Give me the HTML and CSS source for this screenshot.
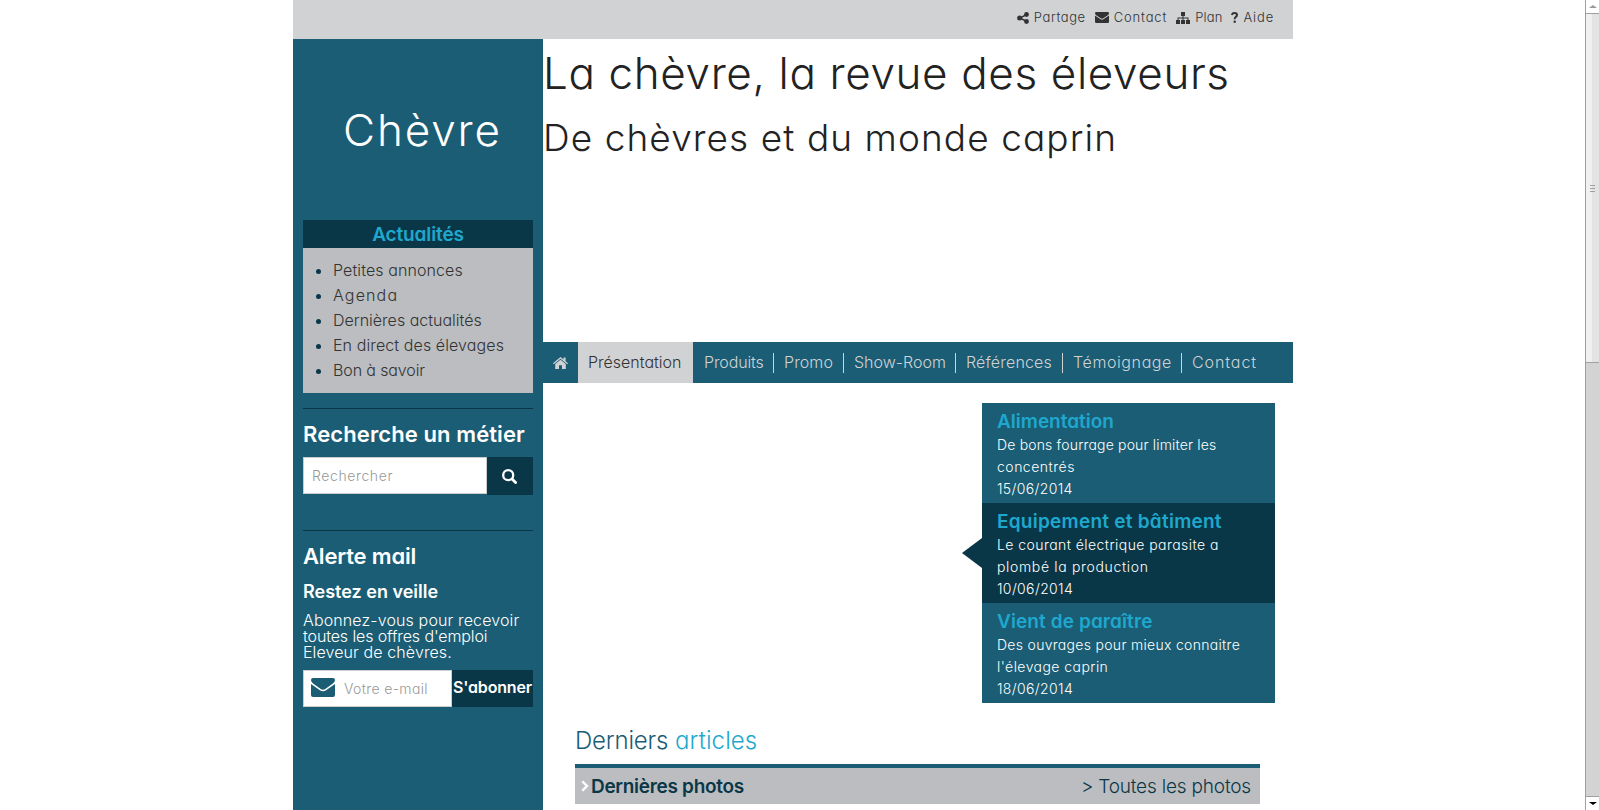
FILE: index.html
```
<!DOCTYPE html>
<html lang="fr">
<head>
<meta charset="utf-8">
<title>Chèvre</title>
<link rel="stylesheet" href="styles.css">
</head>
<body>
<div class="page">
<header class="topbar">
<a class="tool"><svg class="i-share" viewBox="0 0 12 12"><path d="M3 6 9.500 2.700M3 6l6.500 3.300" stroke="currentColor" stroke-width="1.500"/><circle cx="2.600" cy="6" r="2.500"/><circle cx="9.500" cy="2.500" r="2.400"/><circle cx="9.500" cy="9.500" r="2.400"/></svg><span class="ls-6">Partage</span></a>
<a class="tool"><svg class="i-mail" viewBox="0 0 14 11"><path d="M0 1.200Q0 0 1.200 0H12.800Q14 0 14 1.200 14 2.300 12.800 3.200L8.300 6.300Q7 7.200 5.700 6.300L1.200 3.200Q0 2.300 0 1.200ZM0 3.500 5.200 7.100Q7 8.300 8.800 7.100L14 3.500V9.800Q14 11 12.800 11H1.200Q0 11 0 9.800Z"/></svg><span class="ls-8">Contact</span></a>
<a class="tool"><svg class="i-plan" viewBox="0 0 14 12"><path d="M5 0H9V4H7.500V5.500H12.500V8H14V12H10V8H11.500V6.500H7.500V8H9V12H5V8H6.500V6.500H2.500V8H4V12H0V8H1.500V5.500H6.500V4H5Z"/></svg><span class="ls-2">Plan</span></a>
<a class="tool"><svg class="i-help" viewBox="0 0 7 11"><path class="line" d="M.8 3Q1.200 1 3.500 1 6 1 6 3 6 4.300 4.600 5 3.700 5.500 3.700 7.200" stroke-width="2"/><path d="M2.600 8.600h2.200v2.200h-2.200z"/></svg><span class="ls-8">Aide</span></a>
</header>
<div class="columns">
<aside class="sidebar">
<div class="logo">Chèvre</div>
<h3 class="box-title">Actualités</h3>
<ul class="box-list">
<li><span class="ls-1">Petites annonces</span></li>
<li><span class="ls-11">Agenda</span></li>
<li>Dernières actualités</li>
<li><span class="ls-1">En direct des élevages</span></li>
<li><span class="ls-m1">Bon à savoir</span></li>
</ul>
<section class="search">
<h2 class="side-title"><span class="ls-1">Recherche un métier</span></h2>
<div class="field"><div class="input"><span class="ls-6">Rechercher</span></div><div class="btn-search"><svg class="i-search line" viewBox="0 0 15 15"><circle cx="6.200" cy="6.200" r="5" stroke-width="2.300"/><path d="m10 10 3.600 3.600" stroke-width="2.800" stroke-linecap="round"/></svg></div></div>
</section>
<section class="alert">
<h2 class="side-title"><span class="ls-m2">Alerte mail</span></h2>
<h3 class="side-sub">Restez en veille</h3>
<p class="intro"><span class="ls-15">Abonnez-vous pour recevoir</span><br><span class="ls-m1">toutes les offres d'emploi</span><br><span class="ls-1">Eleveur de chèvres.</span></p>
<div class="field"><div class="input mail"><svg class="i-big" viewBox="0 0 14 11" preserveAspectRatio="none"><path d="M0 1.200Q0 0 1.200 0H12.800Q14 0 14 1.200 14 2.300 12.800 3.200L8.300 6.300Q7 7.200 5.700 6.300L1.200 3.200Q0 2.300 0 1.200ZM0 3.500 5.200 7.100Q7 8.300 8.800 7.100L14 3.500V9.800Q14 11 12.800 11H1.200Q0 11 0 9.800Z"/></svg><span class="ls-4">Votre e-mail</span></div><div class="btn-sub"><span class="ls-m2">S'abonner</span></div></div>
</section>
</aside>
<main class="main">
<div class="hero">
<h1>La chèvre, la revue des éleveurs</h1>
<h2>De chèvres et du monde caprin</h2>
</div>
<nav class="nav">
<a class="home"><svg class="i-home" viewBox="0 0 15 12"><path d="M0 6.300 7.500 0 10.500 2.500V.6H12.600V4.300L15 6.300 14.200 7.200 7.500 1.700.8 7.200Z"/><path d="M2.200 7 7.500 2.700 12.800 7V12H9V8.200H6V12H2.200Z"/></svg></a>
<a class="active">Présentation</a>
<a class="n1"><span class="ls-m1">Produits</span></a>
<a class="n2"><span class="ls-1">Promo</span></a>
<a class="n3">Show-Room</a>
<a class="n4"><span class="ls-2">Références</span></a>
<a class="n5"><span class="ls-6">Témoignage</span></a>
<a class="n6"><span class="ls-9">Contact</span></a>
</nav>
<div class="news">
<article class="item"><h3>Alimentation</h3><p><span class="ls-2">De bons fourrage pour limiter les</span><br><span class="ls-5">concentrés</span><br><span class="ls-4">15/06/2014</span></p></article>
<article class="item on"><svg class="arrow" viewBox="0 0 20 30"><path d="M20 0V30L0 15Z"/></svg><h3><span class="ls-25">Equipement et bâtiment</span></h3><p><span class="ls-45">Le courant électrique parasite a</span><br><span class="ls-65">plombé la production</span><br><span class="ls-4">10/06/2014</span></p></article>
<article class="item"><h3><span class="ls-1">Vient de paraître</span></h3><p><span class="ls-3">Des ouvrages pour mieux connaitre</span><br><span class="ls-45">l'élevage caprin</span><br><span class="ls-4">18/06/2014</span></p></article>
</div>
<section class="latest">
<h2><span class="ls-m2">Derniers</span> <span class="accent">articles</span></h2>
<div class="bar"><svg class="chev line" viewBox="0 0 8 12" stroke-width="2.400"><path d="m1.300 1.300 4.700 4.700-4.700 4.700"/></svg><strong>Dernières photos</strong><a>&gt; Toutes les photos</a></div>
</section>
</main>
</div>
</div>
<div class="scroll"><div class="cap up"><svg viewBox="0 0 8 3"><path d="M0 3 4 0 8 3Z"/></svg></div><div class="thumb"><i></i><i></i><i></i></div><div class="track"></div><div class="cap"><svg viewBox="0 0 8 3"><path d="M0 0H8L4 3Z"/></svg></div></div>
</body>
</html>
```
FILE: styles.css
```
*{box-sizing:border-box}
body{margin:0;height:810px;overflow:hidden;background:#fff;color:#222;font:300 16px/25px Inter,"Liberation Sans",sans-serif;font-feature-settings:"cv11" 1;display:flex;justify-content:space-between}
h1,h2,h3,p,ul{margin:0;padding:0;font-weight:300}
svg{display:block;fill:currentColor;flex:none}
svg.line,path.line{fill:none;stroke:currentColor}
h1,h2,h3,span,a{white-space:nowrap}

/* letter-spacing steps */
.ls-m2{letter-spacing:-.18px}
.ls-m1{letter-spacing:-.12px}
.ls-1{letter-spacing:.1px}
.ls-15{letter-spacing:.13px}
.ls-2{letter-spacing:.17px}
.ls-25{letter-spacing:.25px}
.ls-3{letter-spacing:.3px}
.ls-4{letter-spacing:.36px}
.ls-45{letter-spacing:.44px}
.ls-5{letter-spacing:.5px}
.ls-6{letter-spacing:.6px}
.ls-65{letter-spacing:.66px}
.ls-8{letter-spacing:.83px}
.ls-9{letter-spacing:.92px}
.ls-11{letter-spacing:1.15px}

.page{width:1000px;height:810px;margin-left:293px;overflow:hidden}
.topbar{height:39px;background:#d1d2d4;display:flex;justify-content:flex-end;padding:5px 19px 0 0;gap:9px;font-size:13px;color:#333}
.tool{display:flex;align-items:center;gap:5px;height:25px}
.i-share{width:12px;height:12px}
.i-mail{width:14px;height:11px}
.i-plan{width:14px;height:12px}
.i-help{width:7px;height:11px}
.columns{display:flex;height:771px}
.sidebar{width:250px;background:#1a5d74;color:#fff;padding:0 10px}
.logo{height:181px;padding:60px 0 0 40px;font-size:44px;line-height:62px;letter-spacing:1.85px}
.box-title{height:28px;background:#0a3747;color:#1fa8ce;text-align:center;font-size:19px;line-height:29px;font-weight:600;letter-spacing:-.12px}
.box-list{height:145px;background:#bbbdc0;color:#333;padding:10px 0 0 30px}
.box-list li::marker{color:#0a3747}
.search{margin-top:15px;border-top:1px solid #0a3747;height:122px}
.alert{border-top:1px solid #0a3747}
.side-title{font-size:22px;line-height:32px;font-weight:600;padding-top:9px}
.search .side-title{height:48px}
.side-sub{font-size:18px;line-height:25px;font-weight:600;margin-top:7px}
.intro{font-size:16px;line-height:16px;margin:8px 0 10px}
.field{display:flex;align-items:flex-start}
.input{flex:1;height:37px;border:1px solid #ccc;background:#fff;color:#999;font-size:14px;line-height:35px;padding-left:8px}
.btn-search{width:46px;height:38px;background:#0a3747;display:flex;align-items:center;justify-content:center;padding-right:1px}
.i-search{width:15px;height:15px}
.mail{display:flex;align-items:center;gap:9px;padding-left:7px}
.i-big{width:24px;height:19px;color:#1a5d74;margin-top:-2px}
.btn-sub{width:81px;height:37px;background:#0a3747;font-weight:600;line-height:35px;text-align:center}
.main{width:750px}
.hero{height:303px;padding-top:3px}
.hero h1{font-size:44px;line-height:62px;letter-spacing:.62px}
.hero h2{font-size:37px;line-height:52px;margin-top:8px;letter-spacing:1.08px}
.nav{height:41px;background:#1a5d74;color:#d1d2d4;display:flex;align-items:center}
.nav a{display:flex;align-items:center;height:20px;padding:0 0 0 10px;border-right:1px solid #d1d2d4}
.nav .home,.nav .n6{border:0}
.nav .home{width:35px}
.i-home{width:15px;height:12px}
.nav .active{height:41px;width:115px;background:#d1d2d4;color:#333;border:0}
.nav .n1{width:81px;padding-left:11px}
.nav .n2{width:70px}
.nav .n3{width:112px}
.nav .n4{width:107px}
.nav .n5{width:119px}
.news{width:293px;margin:20px 0 0 439px;color:#fff}
.item{position:relative;height:100px;padding:6px 15px 0;background:#1a5d74}
.item.on{background:#0a3747}
.item h3{font-size:19px;line-height:25px;font-weight:600;color:#1fa8ce}
.item p{font-size:14px;line-height:22px}
.arrow{position:absolute;left:-20px;top:35px;width:20px;height:30px;color:#0a3747}
.latest{margin:21px 33px 0 32px}
.latest h2{font-size:24px;line-height:34px;height:40px;color:#1a5d74}
.accent{color:#1fa8ce;letter-spacing:.1px}
.bar{border-top:4px solid #1a5d74;height:40px;background:#bbbdc0;color:#0a3747;font-size:19px;display:flex;align-items:center;padding:0 9px 0 6px}
.bar strong{font-weight:600;margin-left:2px;letter-spacing:-.3px}
.bar a{margin-left:auto;letter-spacing:-.18px}
.chev{width:8px;height:12px;color:#fff}
.scroll{width:14px;height:810px;border-left:1px solid #a0a0a0;display:flex;flex-direction:column}
.cap{height:13px;display:flex;align-items:center;justify-content:center;color:#000}
.cap.up{color:#999}
.cap svg{width:8px;height:3px}
.thumb{height:350px;border:solid #a0a0a0;border-width:1px 0;background:linear-gradient(90deg,#f0f0f0 50%,#e3e3e3 50%);display:flex;flex-direction:column;align-items:center;justify-content:center;gap:2px}
.thumb i{width:5px;height:1px;background:#a0a0a0}
.track{flex:1;background:#d3d3d3;border-bottom:1px solid #a0a0a0}
```
